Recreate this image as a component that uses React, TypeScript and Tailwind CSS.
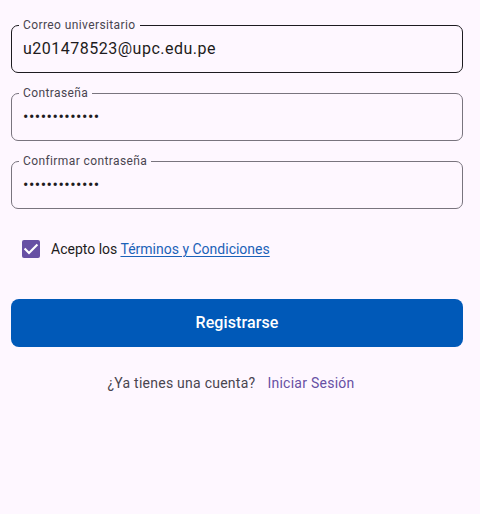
import React from 'react';

const font = { fontFamily: 'Roboto, "Noto Sans", sans-serif' };

const Field = ({ label, value, focused, secret }: { label: string; value: string; focused?: boolean; secret?: boolean }) => (
  <div
    className={`relative h-[48px] rounded-[7px] border flex items-center pl-[11px] ${
      focused ? 'border-[#1d1b20]' : 'border-[#79747e]'
    }`}
  >
    <span className="absolute -top-[9px] left-[7px] px-1 bg-[#fef7ff] text-[12px] leading-4 text-[#49454f] tracking-[0.4px]">
      {label}
    </span>
    {secret ? (
      <span className="text-[16px] leading-6 text-[#1d1b20] tracking-[0.5px]">{'•'.repeat(13)}</span>
    ) : (
      <span className="text-[16px] leading-6 text-[#1d1b20] tracking-[0.5px]">{value}</span>
    )}
  </div>
);

const App = () => {
  return (
    <div className="min-h-[514px] w-[480px] bg-[#fef7ff]" style={font}>
      <div className="ml-[11px] w-[452px] pt-[25px] flex flex-col">
        <div className="flex flex-col gap-5">
          <Field label="Correo universitario" value="u201478523@upc.edu.pe" focused />
          <Field label="Contraseña" value="" secret />
          <Field label="Confirmar contraseña" value="" secret />
        </div>

        <div className="mt-[31px] flex items-center pl-[11px] h-[18px]">
          <div className="w-[18px] h-[18px] rounded-[2px] bg-[#6750a4] flex items-center justify-center">
            <svg width="16" height="16" viewBox="0 0 24 24" fill="none">
              <path d="M3.5 12.5l5.5 5.5L20.5 6.5" stroke="white" strokeWidth="3.2" strokeLinecap="square" />
            </svg>
          </div>
          <span className="ml-[11px] text-[14px] leading-5 text-[#1d1b20]">
            Acepto los{' '}
            <span className="text-[#1b62b8] underline underline-offset-2">Términos y Condiciones</span>
          </span>
        </div>

        <button className="mt-[41px] h-[48px] w-full rounded-[8px] bg-[#0059b8] text-white text-[16px] font-medium tracking-[0.1px]">
          Registrarse
        </button>

        <div className="mt-[26px] flex items-center justify-center h-[20px]">
          <span className="text-[14px] leading-5 text-[#49454f] tracking-[0.25px]">¿Ya tienes una cuenta?</span>
          <span className="px-3 text-[14px] leading-5 text-[#6750a4] tracking-[0.25px]">Iniciar Sesión</span>
        </div>
      </div>
    </div>
  );
};

export default App;
